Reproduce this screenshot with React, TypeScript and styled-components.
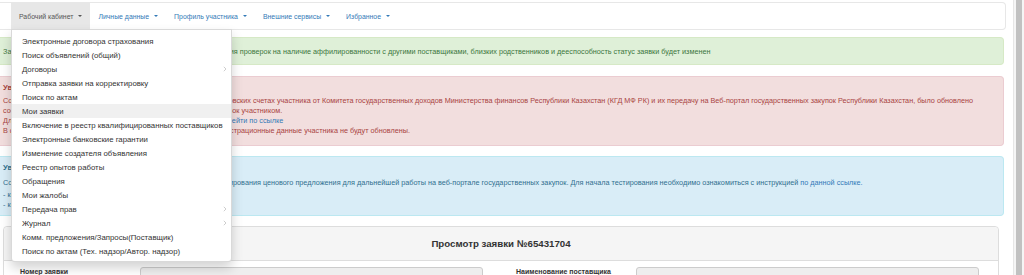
import React from "react";
import styled, { createGlobalStyle } from "styled-components";

const GlobalStyle = createGlobalStyle`
  html, body {
    margin: 0;
    padding: 0;
    background: #ffffff;
    overflow: hidden;
  }
  body {
    font-family: "Liberation Sans", Arial, "Noto Sans", sans-serif;
    color: #333333;
  }
`;

const Page = styled.div`
  display: flex;
  width: 1024px;
  height: 275px;
  overflow: hidden;
`;

const Main = styled.div`
  width: 1013px;
  padding-top: 2px;
  box-sizing: border-box;
`;

const Scrollbar = styled.div`
  width: 11px;
  height: 275px;
  box-sizing: border-box;
  border-left: 1px solid #e6e6e6;
  background: #f5f5f5;
  padding-left: 2px;
`;

const Thumb = styled.div`
  width: 6px;
  height: 100%;
  background: #c1c1c1;
`;

const Navbar = styled.nav`
  display: flex;
  width: 1006px;
  height: 28px;
  box-sizing: border-box;
  padding-left: 11px;
  background: #ffffff;
  border: 1px solid #e7e7e7;
  border-left: none;
  border-radius: 0 4px 4px 0;
`;

const NavItem = styled.div<{ $active?: boolean }>`
  position: relative;
  display: flex;
  align-items: center;
  padding: 0 8px;
  font-size: 6.9px;
  color: ${(p) => (p.$active ? "#555555" : "#337ab7")};
  background: ${(p) => (p.$active ? "#e7e7e7" : "transparent")};
`;

const Caret = styled.span`
  display: inline-block;
  margin-left: 5px;
  border-top: 2.5px solid currentColor;
  border-left: 2px solid transparent;
  border-right: 2px solid transparent;
`;

const Dropdown = styled.ul`
  position: absolute;
  top: 100%;
  left: 0;
  z-index: 10;
  width: 221px;
  box-sizing: border-box;
  margin: 0;
  padding: 4px 0 3px;
  list-style: none;
  background: #ffffff;
  border: 1px solid rgba(0, 0, 0, 0.15);
  border-radius: 0 0 4px 4px;
  box-shadow: 0 6px 12px rgba(0, 0, 0, 0.175);
`;

const MenuItem = styled.li<{ $hover?: boolean }>`
  display: flex;
  align-items: center;
  justify-content: space-between;
  height: 14px;
  padding: 0 4px 0 10px;
  font-size: 7.8px;
  color: #333333;
  white-space: nowrap;
  background: ${(p) => (p.$hover ? "#f0f0f0" : "transparent")};
`;

const Alerts = styled.div`
  display: flex;
  flex-direction: column;
  margin-top: 7px;
  width: 1004px;
`;

const tones = {
  success: { bg: "#dff0d8", border: "#d6e9c6", color: "#3c763d" },
  danger: { bg: "#f2dede", border: "#ebccd1", color: "#a94442" },
  info: { bg: "#d9edf7", border: "#bce8f1", color: "#31708f" },
};

const Alert = styled.div<{ $tone: keyof typeof tones; $gap: number; $pad: string }>`
  margin-bottom: ${(p) => p.$gap}px;
  padding: ${(p) => p.$pad};
  background: ${(p) => tones[p.$tone].bg};
  color: ${(p) => tones[p.$tone].color};
  border: 1px solid ${(p) => tones[p.$tone].border};
  border-left: none;
  border-radius: 0 4px 4px 0;
  font-size: 7.26px;
  line-height: 10px;
  white-space: nowrap;
  overflow: hidden;
`;

const AlertTitle = styled.div<{ $gap: number }>`
  font-weight: 700;
  font-size: 7.6px;
  margin-bottom: ${(p) => p.$gap}px;
`;

const Line = styled.div<{ $gap?: number }>`
  margin-bottom: ${(p) => p.$gap ?? 0}px;
`;

const Link = styled.a`
  color: #337ab7;
  text-decoration: none;
`;

const Panel = styled.div`
  width: 994px;
  margin-left: 3px;
  border: 1px solid #dddddd;
  border-radius: 4px;
  background: #ffffff;
`;

const PanelHeading = styled.div`
  height: 33px;
  display: flex;
  align-items: center;
  justify-content: center;
  background: #f5f5f5;
  border-bottom: 1px solid #dddddd;
  border-radius: 4px 4px 0 0;
  font-size: 9.7px;
  font-weight: 700;
  color: #333333;
`;

const PanelBody = styled.div`
  display: flex;
  gap: 33px;
  padding: 6px 0 0 16px;
`;

const FormGroup = styled.div<{ $label: number }>`
  display: grid;
  grid-template-columns: ${(p) => p.$label}px 343px;
`;

const Label = styled.label`
  padding-top: 1px;
  font-size: 7px;
  font-weight: 700;
  color: #333333;
`;

const Input = styled.div`
  height: 22px;
  box-sizing: border-box;
  background: #eeeeee;
  border: 1px solid #cccccc;
  border-radius: 3px;
`;

const Chevron = () => (
  <svg width="4" height="6" viewBox="0 0 4 6">
    <path d="M0.8 0.8 L3 3 L0.8 5.2" fill="none" stroke="#c8c8c8" strokeWidth="0.9" />
  </svg>
);

const menu: { label: string; sub?: boolean; hover?: boolean }[] = [
  { label: "Электронные договора страхования" },
  { label: "Поиск объявлений (общий)" },
  { label: "Договоры", sub: true },
  { label: "Отправка заявки на корректировку" },
  { label: "Поиск по актам" },
  { label: "Мои заявки", hover: true },
  { label: "Включение в реестр квалифицированных поставщиков" },
  { label: "Электронные банковские гарантии" },
  { label: "Изменение создателя объявления" },
  { label: "Реестр опытов работы" },
  { label: "Обращения" },
  { label: "Мои жалобы" },
  { label: "Передача прав", sub: true },
  { label: "Журнал", sub: true },
  { label: "Комм. предложения/Запросы(Поставщик)" },
  { label: "Поиск по актам (Тех. надзор/Автор. надзор)" },
];

const navItems = ["Рабочий кабинет", "Личные данные", "Профиль участника", "Внешние сервисы", "Избранное"];

const App = () => {
  return (
    <>
      <GlobalStyle />
      <Page>
        <Main>
          <Navbar>
            {navItems.map((item, i) => (
              <NavItem key={item} $active={i === 0}>
                {item}
                <Caret />
                {i === 0 && (
                  <Dropdown>
                    {menu.map((m) => (
                      <MenuItem key={m.label} $hover={m.hover}>
                        {m.label}
                        {m.sub && <Chevron />}
                      </MenuItem>
                    ))}
                  </Dropdown>
                )}
              </NavItem>
            ))}
          </Navbar>

          <Alerts>
            <Alert $tone="success" $gap={11} $pad="9px 0 7px 3px">
              Заявка уже подана и находится на рассмотрении. После завершения проверок на наличие аффилированности с
              другими поставщиками, близких родственников и дееспособность статус заявки будет изменен
            </Alert>
            <Alert $tone="danger" $gap={10} $pad="6px 0 9px 3px">
              <AlertTitle $gap={3}>Уважаемый участник!</AlertTitle>
              <Line>
                Сообщаем, что сервис по получению и обработке сведений о банковских счетах участника от Комитета
                государственных доходов Министерства финансов Республики Казахстан (КГД МФ РК) и их передачу на Веб-портал
                государственных закупок Республики Казахстан, было обновлено
              </Line>
              <Line>соответствующее ПО. Сведения обновляются при подаче всех заявок участником.</Line>
              <Line>
                Для ознакомления Вам с подробной информацией необходимо <Link href="#">перейти по ссылке</Link>
              </Line>
              <Line>
                В случае отсутствия данных о банковских счетах в КГД МФ РК регистрационные данные участника не будут
                обновлены.
              </Line>
            </Alert>
            <Alert $tone="info" $gap={10} $pad="6px 0 5px 3px">
              <AlertTitle $gap={5}>Уважаемые поставщики!</AlertTitle>
              <Line $gap={2}>
                Сообщаем, что открыт доступ в тестовом режиме к модулям формирования ценового предложения для дальнейшей
                работы на веб-портале государственных закупок. Для начала тестирования необходимо ознакомиться с
                инструкцией <Link href="#">по данной ссылке.</Link>
              </Line>
              <Line>- комм. предложения;</Line>
              <Line>- корректировка.</Line>
            </Alert>
          </Alerts>

          <Panel>
            <PanelHeading>Просмотр заявки №65431704</PanelHeading>
            <PanelBody>
              <FormGroup $label={120}>
                <Label>Номер заявки</Label>
                <Input />
              </FormGroup>
              <FormGroup $label={120}>
                <Label>Наименование поставщика</Label>
                <Input />
              </FormGroup>
            </PanelBody>
          </Panel>
        </Main>
        <Scrollbar>
          <Thumb />
        </Scrollbar>
      </Page>
    </>
  );
};

export default App;
